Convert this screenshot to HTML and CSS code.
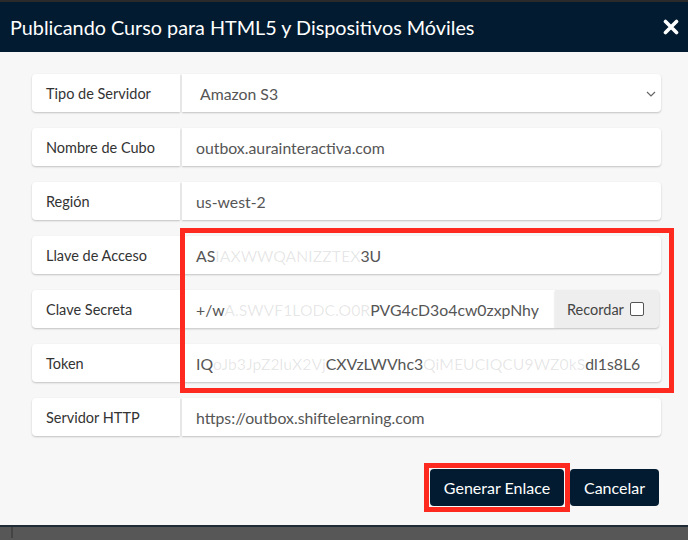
FILE: index.html
```html
<!DOCTYPE html>
<html lang="es">
<head>
<meta charset="utf-8">
<title>Publicando</title>
<link rel="stylesheet" href="styles.css">
</head>
<body>
<div class="topline"></div>
<div class="modal">
  <header class="modal-header">
    <h1 class="modal-title">Publicando Curso para HTML5 y Dispositivos Móviles</h1>
    <svg class="close" viewBox="0 0 16 16" width="16" height="16"><path d="M2.5 2.5 L13.5 13.5 M13.5 2.5 L2.5 13.5" stroke="#fff" stroke-width="3.6" stroke-linecap="round"/></svg>
  </header>
  <div class="modal-body">
    <div class="form">
      <div class="row">
        <div class="label">Tipo de Servidor</div>
        <div class="field select">Amazon S3
          <svg class="chev" viewBox="0 0 10 6" width="10" height="6"><path d="M1 1 L5 5 L9 1" fill="none" stroke="#666" stroke-width="1.2"/></svg>
        </div>
      </div>
      <div class="row">
        <div class="label">Nombre de Cubo</div>
        <div class="field">outbox.aurainteractiva.com</div>
      </div>
      <div class="row">
        <div class="label">Región</div>
        <div class="field">us-west-2</div>
      </div>
      <div class="row">
        <div class="label">Llave de Acceso</div>
        <div class="field">AS<span class="blur">IAXWWQANIZZTEX</span>3U</div>
      </div>
      <div class="row">
        <div class="label">Clave Secreta</div>
        <div class="field field-split"><span class="clip">+/w<span class="blur">A.SWVF1LODC.O0R</span>PVG4cD3o4cw0zxpNhy</span></div>
        <div class="addon">Recordar <span class="check"></span></div>
      </div>
      <div class="row">
        <div class="label">Token</div>
        <div class="field"><span class="clip">IQ<span class="blur">oJb3JpZ2luX2Vj</span>CXVzLWVhc3<span class="blur">QiMEUCIQCU9WZ0kS</span>dl1s8L6</span></div>
      </div>
      <div class="row">
        <div class="label">Servidor HTTP</div>
        <div class="field">https://outbox.shiftelearning.com</div>
      </div>
      <div class="highlight"></div>
    </div>
    <div class="actions">
      <span class="mark"><button class="btn">Generar Enlace</button></span>
      <button class="btn btn-cancel">Cancelar</button>
    </div>
  </div>
</div>
<div class="bottom"><div class="bottom-line"></div></div>
</body>
</html>
```
FILE: styles.css
```css
html, body {
  margin: 0;
  padding: 0;
}
body {
  width: 688px;
  height: 540px;
  overflow: hidden;
  background: #575757;
  font-family: "Lato", "Liberation Sans", sans-serif;
}
.topline {
  height: 2px;
  background: #2a2a2a;
}
.modal-header {
  height: 50px;
  background: #021b30;
  display: flex;
  align-items: center;
  justify-content: space-between;
  padding: 0 9px 0 10px;
}
.modal-title {
  margin: 0;
  color: #fff;
  font-weight: 400;
  font-size: 19.8px;
}
.close {
  display: block;
}
.modal-body {
  height: 475px;
  background: #f7f7f7;
  box-sizing: border-box;
  padding: 22px 27px 0 32px;
  border-bottom: 2px solid #1f2c38;
}
.form {
  position: relative;
  display: flex;
  flex-direction: column;
  gap: 16px;
}
.row {
  display: flex;
  height: 38px;
  gap: 2px;
}
.label, .field, .addon {
  background: #fff;
  display: flex;
  align-items: center;
  box-shadow: 0 1px 2px rgba(0,0,0,0.22);
  white-space: nowrap;
  overflow: hidden;
}
.label {
  width: 148px;
  flex: none;
  box-sizing: border-box;
  padding-left: 14px;
  color: #333;
  font-size: 14.5px;
  border-radius: 4px 0 0 4px;
}
.field {
  flex: 1;
  min-width: 0;
  box-sizing: border-box;
  padding-left: 14px;
  color: #555;
  font-size: 15.8px;
  border-radius: 0 4px 4px 0;
}
.select {
  padding-left: 18px;
  justify-content: space-between;
  padding-right: 5px;
}
.chev {
  display: block;
  margin-top: 1px;
}
.blur {
  color: rgba(0,0,0,0.1);
}
.field-split {
  border-radius: 0;
  flex: none;
  width: 373px;
  padding-right: 14px;
}
.clip {
  display: block;
  min-width: 0;
  overflow: hidden;
  white-space: nowrap;
}
.addon {
  flex: none;
  width: 104px;
  box-sizing: border-box;
  margin-left: -2px;
  background: #eeeeee;
  color: #444;
  font-size: 14.5px;
  padding-left: 12px;
  gap: 6px;
  border-radius: 0 4px 4px 0;
}
.check {
  width: 12px;
  height: 12px;
  border: 1px solid #555;
  border-radius: 2px;
  background: #fff;
}
.highlight {
  position: absolute;
  left: 148px;
  top: 154px;
  width: 484px;
  height: 155px;
  border: 5px solid #ff2a1f;
  pointer-events: none;
}
.actions {
  display: flex;
  justify-content: flex-end;
  align-items: center;
  margin-top: 27px;
  padding-right: 2px;
}
.mark {
  display: flex;
  border: 5px solid #ff2a1f;
  padding: 1px;
  background: #f7f7f7;
}
.btn {
  height: 37px;
  border: none;
  border-radius: 4px;
  background: #021b30;
  color: #fff;
  font-family: "Lato", "Liberation Sans", sans-serif;
  font-size: 16px;
  padding: 0 13px;
  cursor: pointer;
}
.mark .btn {
  width: 134px;
}
.btn-cancel {
  width: 89px;
  padding: 0;
}
.bottom {
  height: 11px;
  background: #575757;
  padding-left: 11px;
}
.bottom-line {
  width: 2px;
  height: 11px;
  background: #444;
}
```
